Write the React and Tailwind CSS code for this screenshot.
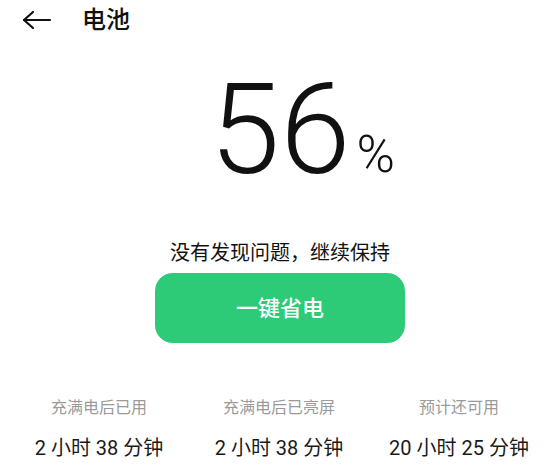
import React from "react";

export default function App() {
  const font = { fontFamily: 'Roboto, "Noto Sans CJK SC", sans-serif' };
  const stats = [
    { label: "充满电后已用", value: "2 小时 38 分钟" },
    { label: "充满电后已亮屏", value: "2 小时 38 分钟" },
    { label: "预计还可用", value: "20 小时 25 分钟" },
  ];
  return (
    <div className="w-[554px] h-[472px] bg-white overflow-hidden text-[#111]" style={font}>
      <div className="h-10 flex items-center">
        <svg className="ml-[22px]" width="30" height="20" viewBox="0 0 30 20" fill="none" stroke="#111" strokeWidth="2.2" strokeLinecap="round" strokeLinejoin="round">
          <path d="M2 10 H28" />
          <path d="M11 2 L2 10 L11 18" />
        </svg>
        <span className="ml-[30px] text-[24px] font-medium leading-none">电池</span>
      </div>
      <div className="mt-[27px] flex justify-center pl-[6px]">
        <div className="relative">
          <span className="block text-[127px] leading-[126px] font-light">56</span>
          <span className="absolute left-full bottom-[12px] ml-[6px] text-[52px] leading-none font-light">%</span>
        </div>
      </div>
      <div className="mt-[46px] text-center text-[20px] leading-[28px] pl-[6px]">没有发现问题，继续保持</div>
      <div className="mt-[6px] flex justify-center pl-[6px]">
        <button className="w-[250px] h-[70px] rounded-[18px] bg-[#2dca78] text-white text-[22px] font-medium">一键省电</button>
      </div>
      <div className="mt-[53px] grid grid-cols-3 pl-[9px] pr-[5px]">
        {stats.map((s) => (
          <div key={s.label} className="flex flex-col items-center">
            <div className="text-[16px] leading-[24px] text-[#9a9a9a]">{s.label}</div>
            <div className="mt-[14px] text-[20px] leading-[28px] text-[#1a1a1a]">{s.value}</div>
          </div>
        ))}
      </div>
    </div>
  );
}
